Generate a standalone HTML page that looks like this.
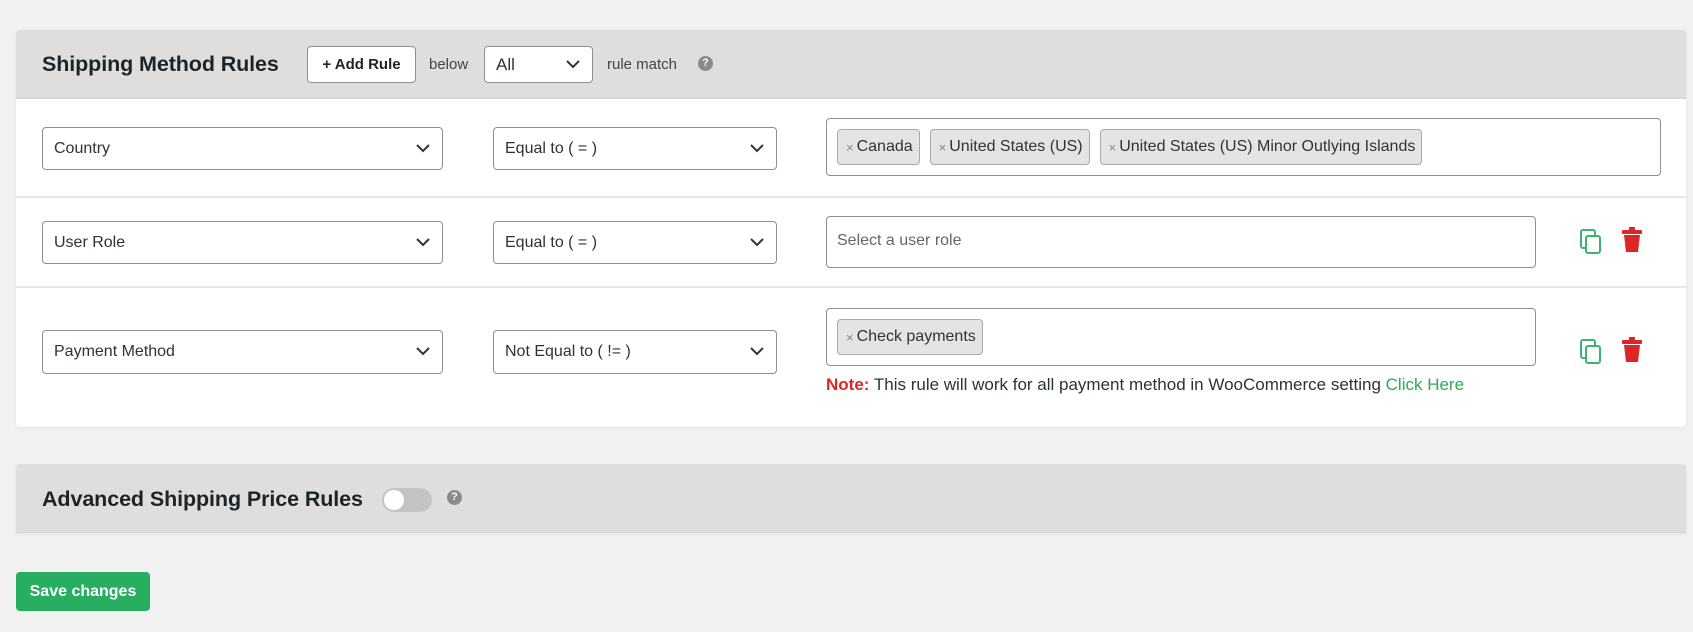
<!DOCTYPE html>
<html><head><meta charset="utf-8"><style>
*{box-sizing:border-box;margin:0;padding:0}
body{width:1693px;height:632px;background:#f1f1f1;font-family:"Liberation Sans",sans-serif;color:#2c3338;position:relative;overflow:hidden;font-size:16px}
.abs{position:absolute}
.panel{position:absolute;left:16px;width:1670px;background:#fff;border-radius:4px;box-shadow:0 1px 4px rgba(0,0,0,.06)}
.hdr{background:#dedede;border-radius:4px 4px 0 0;border-bottom:1px solid #d4d4d4}
.title{font-size:21.5px;font-weight:600;color:#1d2327;letter-spacing:-.1px}
.sel{position:absolute;border:1px solid #8c8f94;border-radius:4px;background:#fff;padding-left:11px;display:flex;align-items:center;font-size:16px;color:#2c3338}
.sel svg{position:absolute;right:12px;top:50%;margin-top:-5px}
.box{position:absolute;border:1px solid #8c8f94;border-radius:4px;background:#fff;display:flex;align-items:flex-start;padding:10px 0 0 10px;gap:10px}
.tag{background:#e4e4e4;border:1px solid #aaa;border-radius:4px;height:36px;display:flex;align-items:center;padding:0 6px 0 8px;font-size:16px;color:#333;white-space:nowrap}
.tag b{font-weight:normal;color:#888;font-size:13px;margin-right:3px}
.sep{position:absolute;left:0;width:1670px;height:2px;background:#e6e6e6}
.q{position:absolute;width:15px;height:15px;border-radius:50%;background:#8a8a8a;color:#fff;font-size:11px;font-weight:bold;text-align:center;line-height:15px}
</style></head><body>

<div class="panel" style="top:30px;height:397px">
  <div class="hdr" style="height:69px"></div>
  <div class="sep" style="top:166px"></div>
  <div class="sep" style="top:256px"></div>
</div>
<div class="abs title" style="left:42px;top:52px">Shipping Method Rules</div>
<div class="abs" style="left:307px;top:46px;width:109px;height:37px;border:1px solid #8c8f94;border-radius:4px;background:#fff;font-size:15px;font-weight:600;color:#1d2327;display:flex;align-items:center;justify-content:center">+ Add Rule</div>
<div class="abs" style="left:429px;top:56px;font-size:15px;color:#444">below</div>
<div class="sel" style="left:484px;top:46px;width:109px;height:37px;font-size:17px">All<svg width="14" height="9" viewBox="0 0 14 9"><path d="M1 1l6 6 6-6" fill="none" stroke="#333" stroke-width="2"/></svg></div>
<div class="abs" style="left:607px;top:56px;font-size:15px;color:#444">rule match</div>
<div class="q" style="left:698px;top:56px">?</div>

<!-- row 1 -->
<div class="sel" style="left:42px;top:127px;width:401px;height:43px">Country<svg width="14" height="9" viewBox="0 0 14 9"><path d="M1 1l6 6 6-6" fill="none" stroke="#333" stroke-width="2"/></svg></div>
<div class="sel" style="left:493px;top:127px;width:284px;height:43px">Equal to ( = )<svg width="14" height="9" viewBox="0 0 14 9"><path d="M1 1l6 6 6-6" fill="none" stroke="#333" stroke-width="2"/></svg></div>
<div class="box" style="left:826px;top:118px;width:835px;height:58px">
<div class="tag"><b>×</b>Canada</div>
<div class="tag"><b>×</b>United States (US)</div>
<div class="tag"><b>×</b>United States (US) Minor Outlying Islands</div>
</div>

<!-- row 2 -->
<div class="sel" style="left:42px;top:221px;width:401px;height:43px">User Role<svg width="14" height="9" viewBox="0 0 14 9"><path d="M1 1l6 6 6-6" fill="none" stroke="#333" stroke-width="2"/></svg></div>
<div class="sel" style="left:493px;top:221px;width:284px;height:43px">Equal to ( = )<svg width="14" height="9" viewBox="0 0 14 9"><path d="M1 1l6 6 6-6" fill="none" stroke="#333" stroke-width="2"/></svg></div>
<div class="box" style="left:826px;top:216px;width:710px;height:52px"></div>
<div class="abs" style="left:837px;top:232px;font-size:16px;color:#666">Select a user role</div>
<svg class="abs" style="left:1580px;top:229px" width="24" height="26" viewBox="0 0 24 26"><rect x="1" y="1" width="14" height="18" rx="2" fill="none" stroke="#3cb371" stroke-width="2"/><rect x="6" y="7" width="14" height="17" rx="2" fill="#fff" stroke="#3cb371" stroke-width="2"/></svg>
<svg class="abs" style="left:1622px;top:227px" width="20" height="26" viewBox="0 0 20 26"><rect x="7" y="0" width="6" height="3" fill="#dc2626"/><rect x="0" y="3" width="20" height="4" rx="1" fill="#dc2626"/><path d="M2 8h16l-2 17H4z" fill="#dc2626"/></svg>

<!-- row 3 -->
<div class="sel" style="left:42px;top:330px;width:401px;height:44px">Payment Method<svg width="14" height="9" viewBox="0 0 14 9"><path d="M1 1l6 6 6-6" fill="none" stroke="#333" stroke-width="2"/></svg></div>
<div class="sel" style="left:493px;top:330px;width:284px;height:44px">Not Equal to ( != )<svg width="14" height="9" viewBox="0 0 14 9"><path d="M1 1l6 6 6-6" fill="none" stroke="#333" stroke-width="2"/></svg></div>
<div class="box" style="left:826px;top:308px;width:710px;height:58px"><div class="tag"><b>×</b>Check payments</div></div>
<svg class="abs" style="left:1580px;top:339px" width="24" height="26" viewBox="0 0 24 26"><rect x="1" y="1" width="14" height="18" rx="2" fill="none" stroke="#3cb371" stroke-width="2"/><rect x="6" y="7" width="14" height="17" rx="2" fill="#fff" stroke="#3cb371" stroke-width="2"/></svg>
<svg class="abs" style="left:1622px;top:337px" width="20" height="26" viewBox="0 0 20 26"><rect x="7" y="0" width="6" height="3" fill="#dc2626"/><rect x="0" y="3" width="20" height="4" rx="1" fill="#dc2626"/><path d="M2 8h16l-2 17H4z" fill="#dc2626"/></svg>
<div class="abs" style="left:826px;top:375px;font-size:17px;color:#2c3338;white-space:nowrap"><span style="color:#dc2626;font-weight:bold">Note:</span> This rule will work for all payment method in WooCommerce setting <span style="color:#2eaa5c">Click Here</span></div>

<!-- panel 2 -->
<div class="panel" style="top:464px;height:69px;background:#dedede;border-bottom:1px solid #d4d4d4;border-radius:4px 4px 0 0"></div>
<div class="abs title" style="left:42px;top:487px">Advanced Shipping Price Rules</div>
<div class="abs" style="left:382px;top:488px;width:50px;height:24px;border-radius:12px;background:#c4c4c4"></div>
<div class="abs" style="left:384px;top:490px;width:20px;height:20px;border-radius:50%;background:#fff"></div>
<div class="q" style="left:447px;top:490px">?</div>

<div class="abs" style="left:16px;top:572px;width:134px;height:39px;background:#27ae60;border-radius:4px;color:#fff;font-size:16px;font-weight:600;display:flex;align-items:center;justify-content:center">Save changes</div>
</body></html>
